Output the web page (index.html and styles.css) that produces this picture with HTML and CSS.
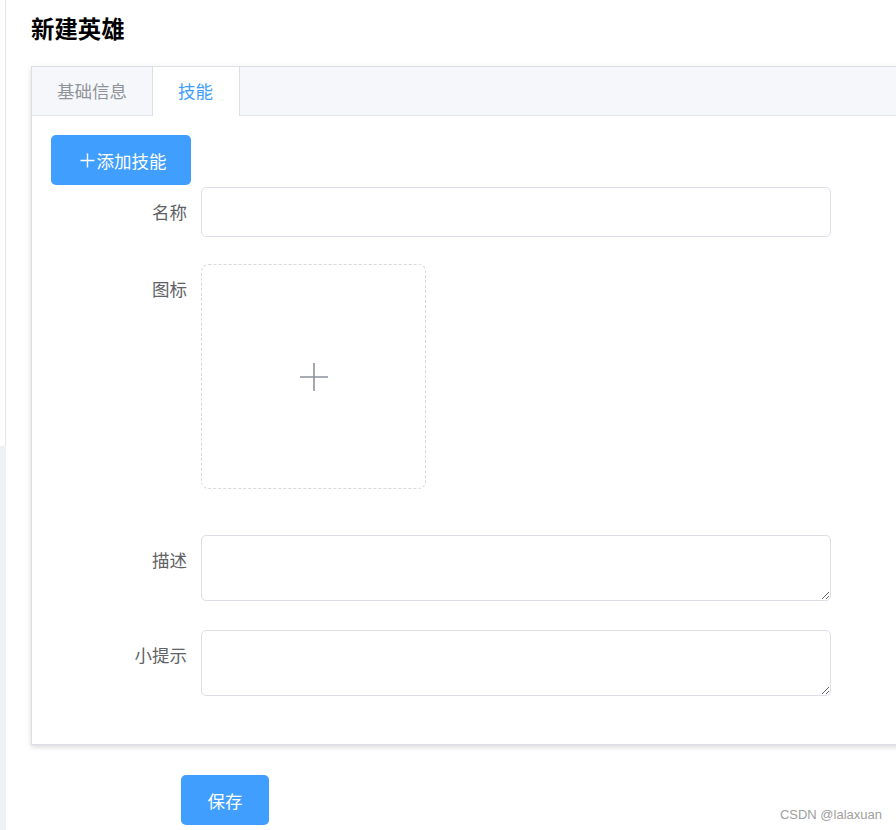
FILE: index.html
```html
<!DOCTYPE html>
<html lang="zh">
<head>
<meta charset="utf-8">
<title>新建英雄</title>
<link rel="stylesheet" href="styles.css">
</head>
<body>
<div class="layout">
  <aside class="aside"><div class="aside-top"></div></aside>
  <main class="main">
    <h3 class="title">新建英雄</h3>
    <div class="tabs">
      <div class="tabs-header">
        <div class="tab">基础信息</div>
        <div class="tab tab-active">技能</div>
      </div>
      <div class="tabs-content">
        <button class="btn btn-add" type="button"><svg class="btn-plus" width="17" height="17" viewBox="0 0 17 17"><path d="M8.5 1.5v14M1.5 8.5h14" stroke="#fff" stroke-width="1.4" fill="none"/></svg>添加技能</button>
        <div class="form">
          <div class="form-item item-name">
            <label class="form-label">名称</label>
            <input class="input" type="text">
          </div>
          <div class="form-item item-icon">
            <label class="form-label">图标</label>
            <div class="uploader">
              <svg width="30" height="30" viewBox="0 0 30 30"><path d="M15 1v28M1 15h28" stroke="#8c939d" stroke-width="1.6" fill="none"/></svg>
            </div>
          </div>
          <div class="form-item item-desc">
            <label class="form-label">描述</label>
            <textarea class="textarea"></textarea>
          </div>
          <div class="form-item item-tips">
            <label class="form-label">小提示</label>
            <textarea class="textarea"></textarea>
          </div>
        </div>
      </div>
    </div>
    <div class="actions">
      <button class="btn btn-save" type="button">保存</button>
    </div>
  </main>
</div>
<div class="watermark">CSDN @lalaxuan</div>
</body>
</html>
```
FILE: styles.css
```css
html, body {
  margin: 0;
  padding: 0;
  width: 896px;
  height: 830px;
  overflow: hidden;
  background: #fff;
  font-family: "Noto Sans CJK SC", "Noto Sans", sans-serif;
}

.layout {
  display: flex;
  height: 830px;
}

.aside {
  width: 6px;
  flex: none;
  background: #eef1f6;
}

.aside-top {
  height: 446px;
  background: #fff;
  border-right: 1px solid #e6e6e6;
  box-sizing: border-box;
}

.main {
  flex: 1;
  padding-left: 25px;
  overflow: hidden;
}

.title {
  margin: 0 0 21px;
  padding-top: 11px;
  font-size: 23.4px;
  line-height: 34px;
  font-weight: bold;
  color: #000;
}

.tabs {
  width: 1000px;
  border: 1px solid #dcdfe6;
  background: #fff;
  box-shadow: 0 2.5px 5px 0 rgba(0,0,0,.12), 0 0 7.5px 0 rgba(0,0,0,.04);
}

.tabs-header {
  display: flex;
  height: 48px;
  background: #f5f7fa;
  border-bottom: 1px solid #e4e7ed;
}

.tab {
  padding: 0 25px;
  height: 48px;
  line-height: 48px;
  font-size: 17.5px;
  color: #909399;
  border-right: 1px solid transparent;
}

.tab-active {
  padding: 0 26px 0 25px;
  height: 49px;
  color: #409eff;
  background: #fff;
  border-left: 1px solid #dcdfe6;
  border-right: 1px solid #dcdfe6;
  margin-left: -1px;
}

.tabs-content {
  padding: 19px;
}

.btn {
  display: inline-flex;
  align-items: center;
  justify-content: center;
  border: 0;
  border-radius: 5px;
  background: #409eff;
  color: #fff;
  font-family: inherit;
  font-size: 17.5px;
  height: 50px;
  padding: 0;
  cursor: pointer;
}

.btn-add {
  width: 140px;
  padding-left: 3px;
}

.btn-plus {
  margin-right: 1px;
}

.form {
  padding-top: 2px;
}

.form-item {
  display: flex;
  align-items: flex-start;
}

.form-label {
  width: 150px;
  flex: none;
  box-sizing: border-box;
  padding-right: 14px;
  text-align: right;
  line-height: 50px;
  font-size: 17.5px;
  color: #606266;
}

.item-name { margin-bottom: 27px; }
.item-icon { margin-bottom: 46px; }
.item-desc { margin-bottom: 29px; }
.item-tips { margin-bottom: 29px; }

.input {
  width: 630px;
  height: 50px;
  box-sizing: border-box;
  border: 1px solid #dcdfe6;
  border-radius: 5px;
  padding: 0 19px;
  font-family: inherit;
  font-size: 17.5px;
  color: #606266;
  outline: none;
  background: #fff;
}

.uploader {
  width: 225px;
  height: 225px;
  box-sizing: border-box;
  border: 1px dashed #d9d9d9;
  border-radius: 7.5px;
  display: flex;
  align-items: center;
  justify-content: center;
}

.textarea {
  display: block;
  width: 630px;
  height: 66px;
  box-sizing: border-box;
  border: 1px solid #dcdfe6;
  border-radius: 5px;
  padding: 6px 19px;
  font-family: inherit;
  font-size: 17.5px;
  color: #606266;
  outline: none;
  margin: 0;
}

.actions {
  padding: 30px 0 0 150px;
}

.btn-save {
  width: 88px;
}

.watermark {
  position: absolute;
  right: 14px;
  bottom: 8px;
  font-family: "Liberation Sans", Arial, sans-serif;
  font-size: 13px;
  color: #a0a0a0;
}
```
